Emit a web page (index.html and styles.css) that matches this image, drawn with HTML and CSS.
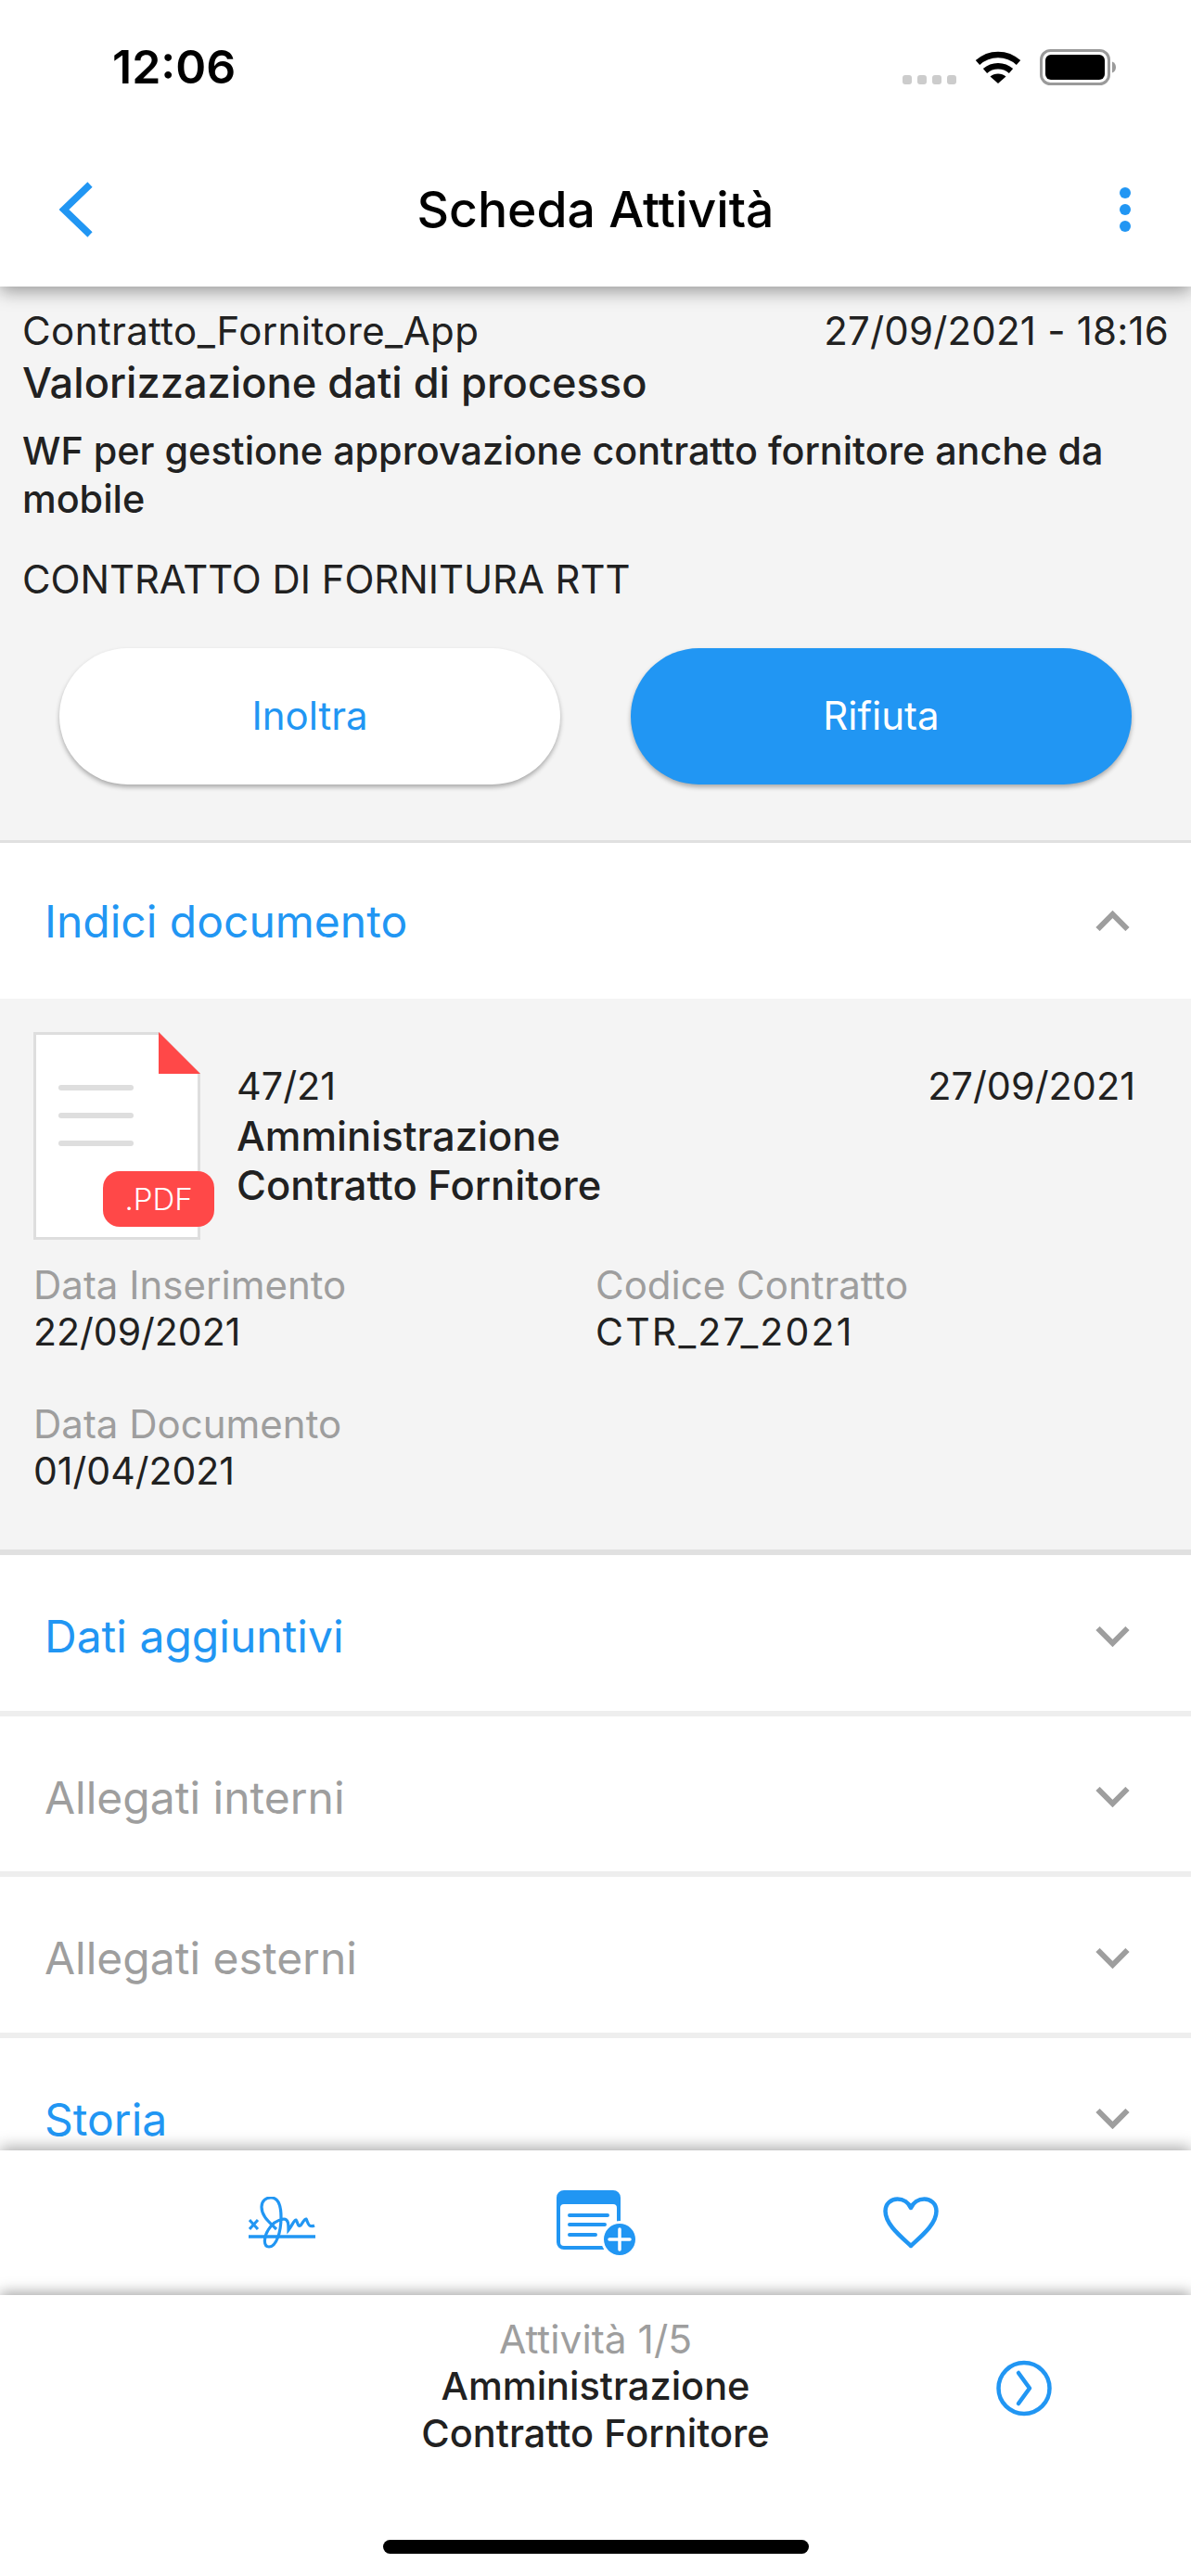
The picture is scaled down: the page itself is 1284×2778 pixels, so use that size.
FILE: index.html
```html
<!DOCTYPE html>
<html lang="it">
<head>
<meta charset="utf-8">
<title>Scheda Attività</title>
<link rel="stylesheet" href="styles.css">
</head>
<body>
<div class="app">
  <div class="top">
    <div class="status">
      <span class="time">12:06</span>
      <div class="status-icons">
        <div class="signal"><i></i><i></i><i></i><i></i></div>
        <svg class="wifi" width="50" height="37" viewBox="0 0 50 37"><path d="M3 14.500C15.500 3 34.500 3 47 14.500" fill="none" stroke="#000" stroke-width="6.500"/><path d="M11 23.500C19 16.500 31 16.500 39 23.500" fill="none" stroke="#000" stroke-width="6.500"/><path d="M25 37L16.500 29.500C21 25.500 29 25.500 33.500 29.500Z" fill="#000"/></svg>
        <svg class="battery" width="82" height="39" viewBox="0 0 82 39"><rect x="1.500" y="1.500" width="73" height="36" rx="10" fill="#fff" stroke="#9a9a9a" stroke-width="3"/><rect x="6" y="6" width="64" height="27" rx="6" fill="#000"/><path d="M78 13.500C81 14.500 82 17 82 19.500C82 22 81 24.500 78 25.500Z" fill="#9a9a9a"/></svg>
      </div>
    </div>
    <div class="nav">
      <svg class="back" width="37" height="60" viewBox="0 0 37 60"><path d="M33 3L5 30L33 57" fill="none" stroke="#2196f3" stroke-width="7.500"/></svg>
      <h1 class="nav-title">Scheda Attività</h1>
      <div class="dots"><i></i><i></i><i></i></div>
    </div>
  </div>

  <main class="content">
    <section class="summary">
      <div class="row-between"><span class="wide-underscore">Contratto_Fornitore_App</span><span class="summary-date">27/09/2021 - 18:16</span></div>
      <div class="summary-title">Valorizzazione dati di processo</div>
      <div class="summary-desc">WF per gestione approvazione contratto fornitore anche da mobile</div>
      <div class="summary-name">CONTRATTO DI FORNITURA RTT</div>
      <div class="actions">
        <button class="btn btn-light">Inoltra</button>
        <button class="btn btn-primary">Rifiuta</button>
      </div>
    </section>

    <div class="acc-head first">
      <span class="acc-title">Indici documento</span>
      <svg class="chev" width="37" height="22" viewBox="0 0 37 22"><path d="M2.500 20L18.500 4L34.500 20" fill="none" stroke="#9e9e9e" stroke-width="6"/></svg>
    </div>

    <section class="doc">
      <div class="doc-top">
        <div class="pdf">
          <svg width="180" height="224" viewBox="0 0 180 224"><path d="M1.500 1.500H135L178.500 45V222.500H1.500Z" fill="#fff" stroke="#dedede" stroke-width="3"/><path d="M135 0L180 45H135Z" fill="#ff4848"/><rect x="27" y="57" width="81" height="6" rx="3" fill="#dedede"/><rect x="27" y="87" width="81" height="6" rx="3" fill="#dedede"/><rect x="27" y="117" width="81" height="6" rx="3" fill="#dedede"/></svg>
          <span class="pdf-badge">.PDF</span>
        </div>
        <div class="doc-main">
          <div class="row-between doc-meta"><span>47/21</span><span>27/09/2021</span></div>
          <div class="doc-title">Amministrazione<br>Contratto Fornitore</div>
        </div>
      </div>
      <div class="fields">
        <div class="field"><div class="field-label">Data Inserimento</div><div class="field-value">22/09/2021</div></div>
        <div class="field"><div class="field-label">Codice Contratto</div><div class="field-value field-code">CTR_27_2021</div></div>
        <div class="field"><div class="field-label">Data Documento</div><div class="field-value">01/04/2021</div></div>
      </div>
    </section>

    <div class="acc-head">
      <span class="acc-title">Dati aggiuntivi</span>
      <svg class="chev" width="37" height="22" viewBox="0 0 37 22"><path d="M2.500 2L18.500 18L34.500 2" fill="none" stroke="#9e9e9e" stroke-width="6"/></svg>
    </div>
    <div class="acc-head">
      <span class="acc-title muted">Allegati interni</span>
      <svg class="chev" width="37" height="22" viewBox="0 0 37 22"><path d="M2.500 2L18.500 18L34.500 2" fill="none" stroke="#9e9e9e" stroke-width="6"/></svg>
    </div>
    <div class="acc-head">
      <span class="acc-title muted">Allegati esterni</span>
      <svg class="chev" width="37" height="22" viewBox="0 0 37 22"><path d="M2.500 2L18.500 18L34.500 2" fill="none" stroke="#9e9e9e" stroke-width="6"/></svg>
    </div>
    <div class="acc-head">
      <span class="acc-title">Storia</span>
      <svg class="chev" width="37" height="22" viewBox="0 0 37 22"><path d="M2.500 2L18.500 18L34.500 2" fill="none" stroke="#9e9e9e" stroke-width="6"/></svg>
    </div>
  </main>

  <div class="toolbar">
    <div class="tool">
      <svg width="72" height="56" viewBox="0 0 72 56" fill="none" stroke="#2196f3"><path d="M0 43H72" stroke-width="3.500"/><path d="M1 25L10 35M10 25L1 35" stroke-width="3"/><path d="M30 35C22 27 14 21 14 11C14 4 19 1 24 1C31 1 35 8 35 22C35 38 30 54 22 54C16 54 16 44 21 36C25 29 31 25 38 24C43 24 43 30 43 36C47 31 49 25 51 25C53 27 53 33 56 31C59 27 60 24 62 24C64 27 64 34 71 31" stroke-width="3.200"/></svg>
    </div>
    <div class="tool">
      <svg width="86" height="70" viewBox="0 0 86 70"><path d="M8 0H61A8 8 0 0 1 69 8V52H65V19A4 4 0 0 0 61 15H8A4 4 0 0 0 4 19V56A4 4 0 0 0 8 60H50L52 64H8A8 8 0 0 1 0 56V8A8 8 0 0 1 8 0Z" fill="#2196f3"/><path d="M14 27H55M14 37H52M14 48H42" stroke="#2196f3" stroke-width="4" stroke-linecap="round"/><circle cx="68" cy="53" r="20" fill="#fff"/><circle cx="68" cy="53" r="17" fill="#2196f3"/><path d="M57 53H79M68 42V64" stroke="#fff" stroke-width="3.500" stroke-linecap="round"/></svg>
    </div>
    <div class="tool">
      <svg width="60" height="56" viewBox="0 0 60 56"><path d="M30 53C17 41 2.500 29 2.500 15.500C2.500 7 9 2.500 15.500 2.500C22 2.500 27.500 6.500 30 12C32.500 6.500 38 2.500 44.500 2.500C51 2.500 57.500 7 57.500 15.500C57.500 29 43 41 30 53Z" fill="none" stroke="#2196f3" stroke-width="4.500" stroke-linejoin="round"/></svg>
    </div>
  </div>

  <footer class="bottom">
    <div class="next-bar">
      <div class="next-text">
        <div class="next-count">Attività 1/5</div>
        <div class="next-title">Amministrazione<br>Contratto Fornitore</div>
      </div>
      <svg class="next-icon" width="60" height="61" viewBox="0 0 60 61"><circle cx="30" cy="30.500" r="27.500" fill="none" stroke="#2196f3" stroke-width="4.500"/><path d="M24 14L36 30.500L24 47" fill="none" stroke="#2196f3" stroke-width="4.500" stroke-linecap="round" stroke-linejoin="round"/></svg>
    </div>
    <div class="home-indicator"></div>
  </footer>
</div>
</body>
</html>
```

FILE: styles.css
```css
* { box-sizing: border-box; }
html, body { margin: 0; padding: 0; background: #fff; }
body { font-family: Inter, "Liberation Sans", sans-serif; color: #212121; }

.app { width: 1284px; height: 2778px; display: flex; flex-direction: column; overflow: hidden; }

.top { height: 309px; background: #fff; box-shadow: 0 5px 18px rgba(0, 0, 0, .38); position: relative; z-index: 3; flex: none; }
.status { height: 120px; position: relative; }
.time { position: absolute; left: 121px; top: 44px; font-size: 50px; line-height: 56px; font-weight: 600; color: #000; }
.status-icons { position: absolute; left: 973px; top: 53px; display: flex; align-items: flex-start; }
.signal { display: flex; gap: 6px; margin-top: 28px; margin-right: 20px; }
.signal i { width: 10px; height: 10px; border-radius: 3px; background: #ccc; }
.wifi { margin-right: 20px; }

.nav { height: 189px; display: flex; align-items: center; justify-content: space-between; padding: 0 65px 0 64px; position: relative; }
.back { margin-top: 22px; }
.nav-title { position: absolute; left: 0; right: 0; top: 74px; margin: 0; text-align: center; font-size: 53.500px; line-height: 64px; font-weight: 500; color: #000; }
.dots { display: flex; flex-direction: column; gap: 6px; margin-top: 22px; }
.dots i { width: 12px; height: 12px; border-radius: 50%; background: #2196f3; }

.content { flex: 1; min-height: 0; overflow: hidden; background: #fff; }

.summary { background: #f4f4f4; padding: 20px 24px 60px; height: 600px; border-bottom: 3px solid #e0e0e0; font-size: 42px; }
.row-between { display: flex; justify-content: space-between; line-height: 56px; }
.wide-underscore { letter-spacing: .4px; }
.summary-date { letter-spacing: .2px; }
.summary-title { font-size: 45.200px; font-weight: 550; line-height: 56px; }
.summary-desc { font-size: 41.300px; font-weight: 550; line-height: 52px; margin-top: 19px; }
.summary-name { font-size: 41.800px; line-height: 52px; margin-top: 35px; }
.actions { display: flex; justify-content: space-between; padding: 0 40px; margin-top: 48px; }
.btn { width: 540px; height: 147px; border: 0; border-radius: 74px; font: 400 42px Inter, sans-serif; padding: 0 0 2px; box-shadow: 0 3px 5px rgba(0, 0, 0, .3); }
.btn-light { background: #fff; color: #2196f3; }
.btn-primary { background: #2196f3; color: #fff; }

.acc-head { height: 173.500px; background: #fff; border-bottom: 6px solid #eee; display: flex; align-items: center; justify-content: space-between; padding: 8px 66px 0 48px; flex: none; }
.acc-head.first { height: 168px; border-bottom: 0; padding-top: 0; }
.acc-title { font-size: 48px; color: #2196f3; }
.acc-title.muted { color: #9e9e9e; }

.doc { background: #f4f4f4; height: 600px; border-bottom: 6px solid #e0e0e0; padding: 36px 60px 0 36px; font-size: 42px; }
.doc-top { display: flex; gap: 39px; }
.pdf { position: relative; width: 180px; height: 224px; flex: none; }
.pdf svg { display: block; }
.pdf-badge { position: absolute; left: 75px; top: 150px; width: 120px; height: 60px; border-radius: 18px; background: #ff4848; color: #fff; font-size: 33px; font-weight: 300; line-height: 60px; text-align: center; }
.doc-main { flex: 1; padding-top: 30px; }
.doc-meta { font-size: 41.400px; }
.doc-title { font-size: 43.500px; font-weight: 550; line-height: 53px; margin-top: 0; }

.fields { display: grid; grid-template-columns: 606px 1fr; row-gap: 50px; margin-top: 24px; }
.field-label { font-size: 42px; line-height: 50px; color: #9e9e9e; }
.field-value { font-size: 41px; line-height: 50px; color: #212121; }
.field-code { letter-spacing: 2.200px; }

.toolbar { height: 156px; background: #fff; display: grid; grid-template-columns: repeat(3, 339px); padding: 0 134px; align-items: center; justify-items: center; box-shadow: 0 -3px 16px rgba(0, 0, 0, .35); position: relative; z-index: 2; flex: none; }
.tool svg { display: block; }

.bottom { height: 303px; background: #fff; box-shadow: 0 -3px 14px rgba(0, 0, 0, .35); position: relative; z-index: 3; flex: none; }
.next-bar { height: 202px; position: relative; padding-top: 23px; text-align: center; }
.next-count { font-size: 42.500px; line-height: 50px; color: #9e9e9e; }
.next-title { font-size: 41.500px; font-weight: 550; line-height: 51px; }
.next-icon { position: absolute; left: 1074px; top: 70px; }
.home-indicator { width: 459px; height: 15px; border-radius: 8px; background: #000; margin: 62px auto 0; }
```
